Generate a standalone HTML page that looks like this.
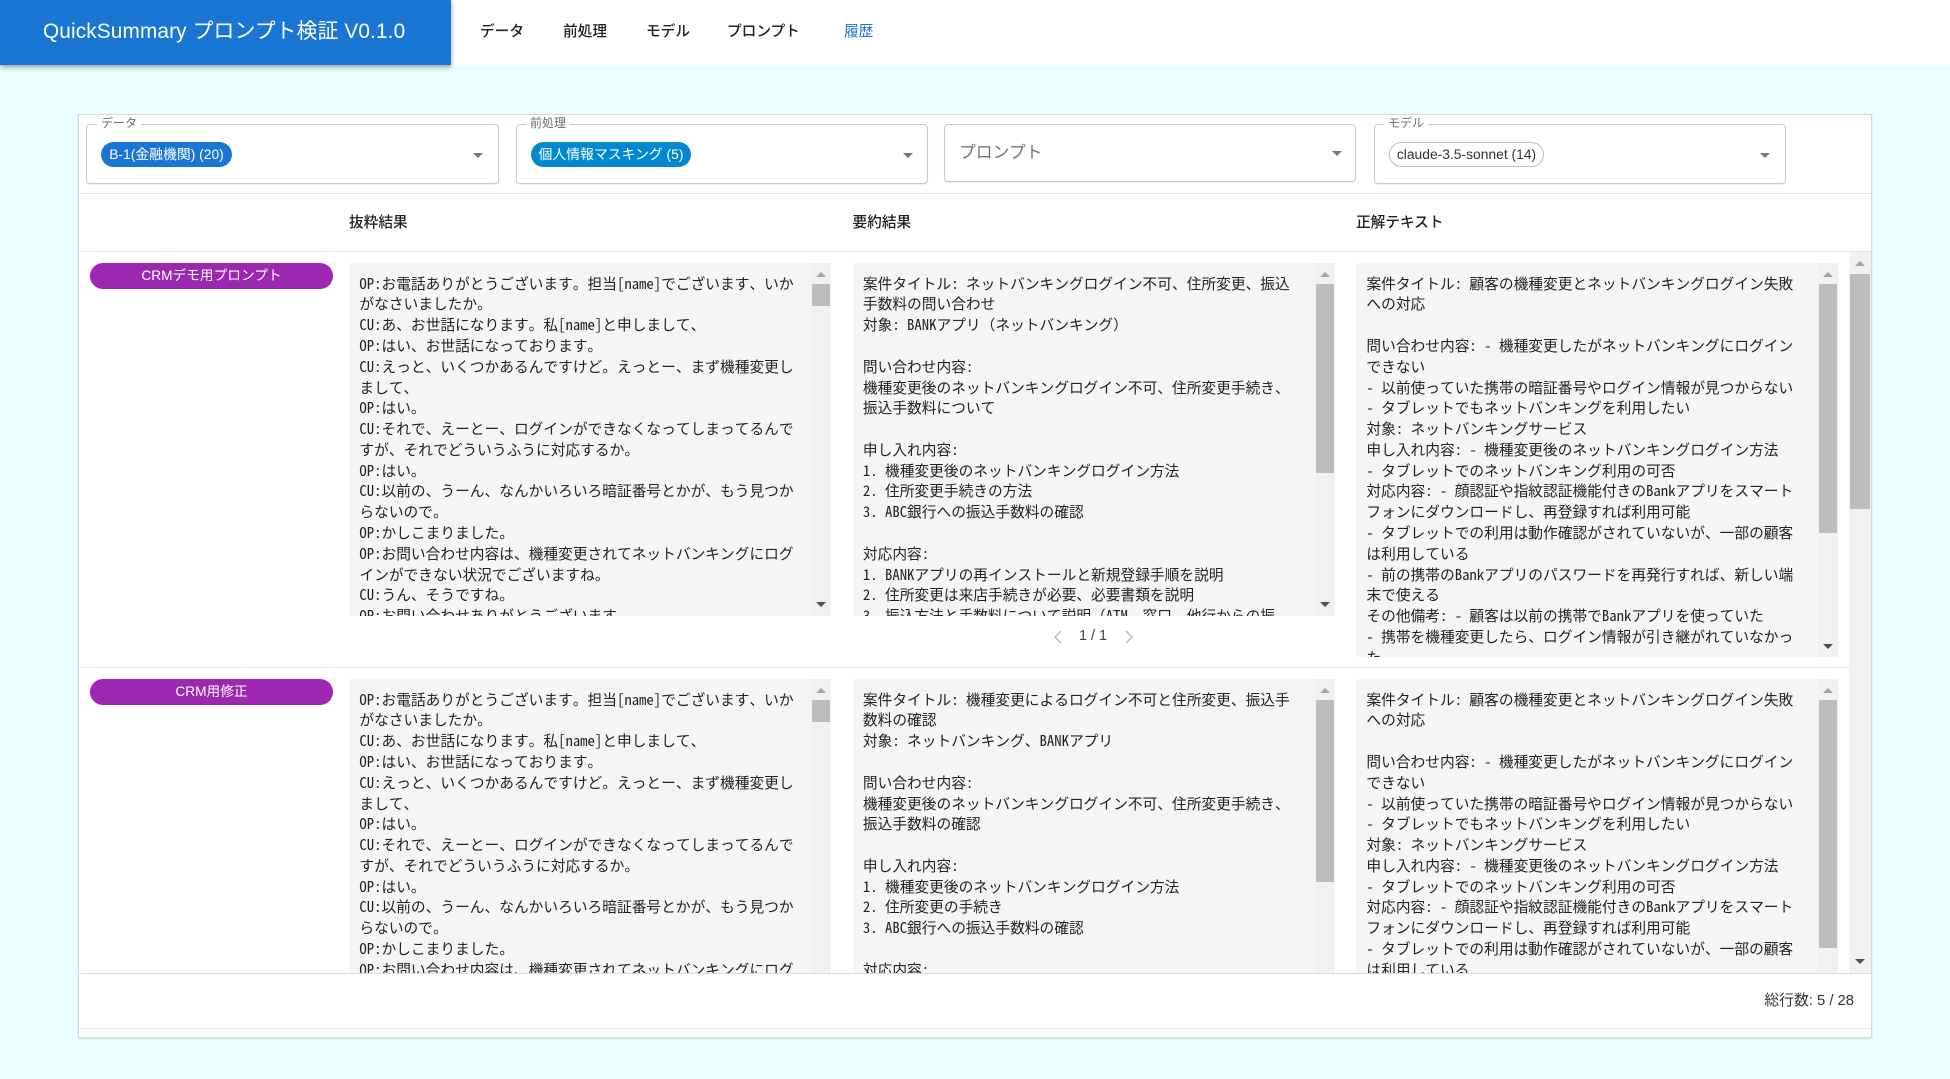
<!DOCTYPE html>
<html lang="ja">
<head>
<meta charset="utf-8">
<style>
*{box-sizing:border-box}
html,body{margin:0;padding:0;width:1950px;height:1079px;overflow:hidden;background:#e8feff;font-family:"Liberation Sans","Noto Sans CJK JP",sans-serif;color:#212121}
.a{position:absolute}
#wrap{left:0;top:0;width:1950px;height:1079px;filter:blur(.3px)}
#top{left:0;top:0;width:1950px;height:65px;background:#fff}
#brand{left:0;top:0;width:451px;height:65px;background:#1976d2;box-shadow:0 2px 5px rgba(0,0,0,.4);color:#fff;font-size:20.8px;line-height:63px;padding-left:43px;white-space:nowrap;letter-spacing:.13px}
.nav{top:21px;font-size:14.67px;line-height:22px;font-weight:500;white-space:nowrap;color:#212121}
#panel{left:78px;top:114px;width:1794px;height:924px;background:#fff;border:1px solid #d8d8d8;box-shadow:0 1px 2px rgba(0,0,0,.12)}
.sel{top:124px;height:60px;border:1px solid #c8c8c8;border-radius:4px;background:#fff;box-shadow:0 1px 1px rgba(0,0,0,.08)}
.lab{top:115px;font-size:12px;line-height:16px;color:#6b6b6b;background:#fff;padding:0 4px;white-space:nowrap}
.chip{top:142px;height:25px;border-radius:13px;font-size:13.85px;line-height:25px;text-align:center;white-space:nowrap;color:#fff}
.tri{width:0;height:0;border-left:5px solid transparent;border-right:5px solid transparent;border-top:5px solid #757575}
.ln{height:1px;background:#e4e4e4}
.th{top:213px;font-size:14.67px;line-height:20px;font-weight:500;white-space:nowrap}
.tag{left:90px;width:243px;height:26px;border-radius:13px;background:#9c27b0;color:#fff;font-size:13.7px;line-height:25px;text-align:center;white-space:nowrap}
.box{background:#f5f5f5;overflow:hidden}
.box pre{margin:0;position:absolute;left:10.4px;top:10.6px;font-family:"Noto Sans Mono CJK JP","Noto Sans CJK JP",monospace;font-size:14.72px;line-height:20.78px;color:#222;white-space:pre}
.track{background:#f1f1f1;width:20px}
.thumb{background:#bdbdbd;width:18px}
.up{width:0;height:0;border-left:5px solid transparent;border-right:5px solid transparent;border-bottom:5px solid #a3a3a3}
.dn{width:0;height:0;border-left:5px solid transparent;border-right:5px solid transparent;border-top:5px solid #505050}
</style>
</head>
<body>
<div class="a" id="wrap">
<div class="a" id="top"></div>
<div class="a" id="brand">QuickSummary プロンプト検証 V0.1.0</div>
<div class="a nav" style="left:480px">データ</div>
<div class="a nav" style="left:563px">前処理</div>
<div class="a nav" style="left:646px">モデル</div>
<div class="a nav" style="left:727px">プロンプト</div>
<div class="a nav" style="left:844px;color:#1976d2;font-weight:400">履歴</div>

<div class="a" id="panel"></div>

<div class="a sel" style="left:86px;width:413px"></div>
<div class="a lab" style="left:97px">データ</div>
<div class="a chip" style="left:101px;width:131px;background:#1976d2">B-1(金融機関) (20)</div>
<div class="a tri" style="left:473px;top:153px"></div>

<div class="a sel" style="left:516px;width:412px"></div>
<div class="a lab" style="left:526px">前処理</div>
<div class="a chip" style="left:531px;width:160px;background:#0288d1">個人情報マスキング (5)</div>
<div class="a tri" style="left:903px;top:153px"></div>

<div class="a sel" style="left:944px;width:412px;height:58px"></div>
<div class="a" style="left:959px;top:142px;font-size:16.8px;line-height:22px;color:#757575;white-space:nowrap">プロンプト</div>
<div class="a tri" style="left:1332px;top:151px"></div>

<div class="a sel" style="left:1374px;width:412px"></div>
<div class="a lab" style="left:1384px">モデル</div>
<div class="a chip" style="left:1389px;width:155px;background:#fff;color:#333;border:1px solid #bdbdbd;line-height:23px">claude-3.5-sonnet (14)</div>
<div class="a tri" style="left:1760px;top:153px"></div>

<div class="a ln" style="left:79px;top:193px;width:1792px"></div>
<div class="a th" style="left:349px">抜粋結果</div>
<div class="a th" style="left:852.5px">要約結果</div>
<div class="a th" style="left:1356px">正解テキスト</div>
<div class="a ln" style="left:79px;top:251px;width:1792px"></div>

<!-- scroll area -->
<div class="a" style="left:79px;top:252px;width:1792px;height:721px;overflow:hidden">
<div class="a" style="left:-79px;top:-252px;width:1950px;height:1079px">

<div class="a tag" style="top:263px">CRMデモ用プロンプト</div>

<div class="a box" style="left:349px;top:263px;width:482px;height:353px"><pre>OP:お電話ありがとうございます。担当[name]でございます、いか
がなさいましたか。
CU:あ、お世話になります。私[name]と申しまして、
OP:はい、お世話になっております。
CU:えっと、いくつかあるんですけど。えっとー、まず機種変更し
まして、
OP:はい。
CU:それで、えーとー、ログインができなくなってしまってるんで
すが、それでどういうふうに対応するか。
OP:はい。
CU:以前の、うーん、なんかいろいろ暗証番号とかが、もう見つか
らないので。
OP:かしこまりました。
OP:お問い合わせ内容は、機種変更されてネットバンキングにログ
インができない状況でございますね。
CU:うん、そうですね。
OP:お問い合わせありがとうございます。</pre></div>
<div class="a track" style="left:811px;top:263px;height:353px"></div>
<div class="a thumb" style="left:812px;top:284px;height:22px"></div>
<div class="a up" style="left:816px;top:272px"></div>
<div class="a dn" style="left:816px;top:602px"></div>

<div class="a box" style="left:852.5px;top:263px;width:482.5px;height:353px"><pre>案件タイトル: ネットバンキングログイン不可、住所変更、振込
手数料の問い合わせ
対象: BANKアプリ（ネットバンキング）

問い合わせ内容:
機種変更後のネットバンキングログイン不可、住所変更手続き、
振込手数料について

申し入れ内容:
1. 機種変更後のネットバンキングログイン方法
2. 住所変更手続きの方法
3. ABC銀行への振込手数料の確認

対応内容:
1. BANKアプリの再インストールと新規登録手順を説明
2. 住所変更は来店手続きが必要、必要書類を説明
3. 振込方法と手数料について説明（ATM、窓口、他行からの振</pre></div>
<div class="a track" style="left:1315px;top:263px;height:353px"></div>
<div class="a thumb" style="left:1316px;top:284px;height:189px"></div>
<div class="a up" style="left:1320px;top:272px"></div>
<div class="a dn" style="left:1320px;top:602px"></div>

<div class="a" style="left:1070px;top:626px;width:46px;height:20px;font-size:14.4px;line-height:20px;text-align:center;color:#444;white-space:nowrap">1 / 1</div>
<svg class="a" style="left:1052px;top:629px" width="12" height="16" viewBox="0 0 12 16"><path d="M9 2 L3 8 L9 14" fill="none" stroke="#b5b5b5" stroke-width="1.4"/></svg>
<svg class="a" style="left:1123px;top:629px" width="12" height="16" viewBox="0 0 12 16"><path d="M3 2 L9 8 L3 14" fill="none" stroke="#b5b5b5" stroke-width="1.4"/></svg>

<div class="a box" style="left:1356px;top:263px;width:482px;height:394px"><pre>案件タイトル: 顧客の機種変更とネットバンキングログイン失敗
への対応

問い合わせ内容: - 機種変更したがネットバンキングにログイン
できない
- 以前使っていた携帯の暗証番号やログイン情報が見つからない
- タブレットでもネットバンキングを利用したい
対象: ネットバンキングサービス
申し入れ内容: - 機種変更後のネットバンキングログイン方法
- タブレットでのネットバンキング利用の可否
対応内容: - 顔認証や指紋認証機能付きのBankアプリをスマート
フォンにダウンロードし、再登録すれば利用可能
- タブレットでの利用は動作確認がされていないが、一部の顧客
は利用している
- 前の携帯のBankアプリのパスワードを再発行すれば、新しい端
末で使える
その他備考: - 顧客は以前の携帯でBankアプリを使っていた
- 携帯を機種変更したら、ログイン情報が引き継がれていなかっ
た</pre></div>
<div class="a track" style="left:1818px;top:263px;height:394px"></div>
<div class="a thumb" style="left:1819px;top:284px;height:249px"></div>
<div class="a up" style="left:1823px;top:272px"></div>
<div class="a dn" style="left:1823px;top:644px"></div>

<div class="a ln" style="left:79px;top:667px;width:1770px"></div>

<div class="a tag" style="top:679px">CRM用修正</div>

<div class="a box" style="left:349px;top:679px;width:482px;height:353px"><pre>OP:お電話ありがとうございます。担当[name]でございます、いか
がなさいましたか。
CU:あ、お世話になります。私[name]と申しまして、
OP:はい、お世話になっております。
CU:えっと、いくつかあるんですけど。えっとー、まず機種変更し
まして、
OP:はい。
CU:それで、えーとー、ログインができなくなってしまってるんで
すが、それでどういうふうに対応するか。
OP:はい。
CU:以前の、うーん、なんかいろいろ暗証番号とかが、もう見つか
らないので。
OP:かしこまりました。
OP:お問い合わせ内容は、機種変更されてネットバンキングにログ
インができない状況でございますね。</pre></div>
<div class="a track" style="left:811px;top:679px;height:353px"></div>
<div class="a thumb" style="left:812px;top:700px;height:22px"></div>
<div class="a up" style="left:816px;top:688px"></div>

<div class="a box" style="left:852.5px;top:679px;width:482.5px;height:353px"><pre>案件タイトル: 機種変更によるログイン不可と住所変更、振込手
数料の確認
対象: ネットバンキング、BANKアプリ

問い合わせ内容:
機種変更後のネットバンキングログイン不可、住所変更手続き、
振込手数料の確認

申し入れ内容:
1. 機種変更後のネットバンキングログイン方法
2. 住所変更の手続き
3. ABC銀行への振込手数料の確認

対応内容:</pre></div>
<div class="a track" style="left:1315px;top:679px;height:353px"></div>
<div class="a thumb" style="left:1316px;top:700px;height:182px"></div>
<div class="a up" style="left:1320px;top:688px"></div>

<div class="a box" style="left:1356px;top:679px;width:482px;height:353px"><pre>案件タイトル: 顧客の機種変更とネットバンキングログイン失敗
への対応

問い合わせ内容: - 機種変更したがネットバンキングにログイン
できない
- 以前使っていた携帯の暗証番号やログイン情報が見つからない
- タブレットでもネットバンキングを利用したい
対象: ネットバンキングサービス
申し入れ内容: - 機種変更後のネットバンキングログイン方法
- タブレットでのネットバンキング利用の可否
対応内容: - 顔認証や指紋認証機能付きのBankアプリをスマート
フォンにダウンロードし、再登録すれば利用可能
- タブレットでの利用は動作確認がされていないが、一部の顧客
は利用している</pre></div>
<div class="a track" style="left:1818px;top:679px;height:353px"></div>
<div class="a thumb" style="left:1819px;top:700px;height:248px"></div>
<div class="a up" style="left:1823px;top:688px"></div>

<!-- outer scrollbar -->
<div class="a" style="left:1849px;top:252px;width:22px;height:721px;background:#f1f1f1"></div>
<div class="a thumb" style="left:1850px;top:274px;height:235px;width:20px"></div>
<div class="a up" style="left:1855px;top:261px"></div>
<div class="a dn" style="left:1855px;top:959px"></div>
</div>
</div>

<div class="a ln" style="left:79px;top:973px;width:1792px;background:#dcdcdc"></div>
<div class="a" style="right:96px;top:991px;font-size:14.8px;line-height:20px;color:#333;white-space:nowrap">総行数: 5 / 28</div>
<div class="a ln" style="left:79px;top:1028px;width:1792px"></div>
</div>
</body>
</html>
